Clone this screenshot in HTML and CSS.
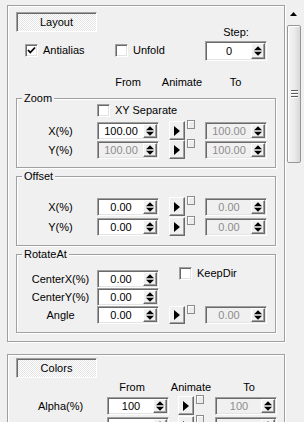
FILE: index.html
```html
<!DOCTYPE html>
<html lang="en">
<head>
    <meta charset="UTF-8">
    <meta name="viewport" content="width=device-width, initial-scale=1.0">
    <title>Layout settings</title>
    <link rel="stylesheet" href="styles.css">
</head>
<body>
    <div class="main">
        <!-- Layout panel -->
        <div class="panel">
            <div class="top">
                <div class="top-left">
                    <div class="tab">Layout</div>
                    <div class="checks">
                        <div class="check check-first">
                            <span class="box"><svg width="9" height="9" viewBox="0 0 9 9"><polyline points="1,4 3.3,6.5 8,1.5" fill="none" stroke="#000" stroke-width="1.8"/></svg></span>Antialias
                        </div>
                        <div class="check"><span class="box"></span>Unfold</div>
                    </div>
                </div>
                <div class="step">
                    <div class="step-label">Step:</div>
                    <div class="spin spin-tall">
                        <span class="val">0</span>
                        <span class="spin-btn"><svg width="10" height="12" viewBox="0 0 10 12"><polygon points="1,5.3 9,5.3 5,1.3"/><polygon points="1,6.7 9,6.7 5,10.7"/></svg></span>
                    </div>
                </div>
            </div>

            <div class="heads">
                <span></span><span>From</span><span>Animate</span><span>To</span>
            </div>

            <div class="group group-zoom">
                <div class="group-title">Zoom</div>
                <div class="xy-row">
                    <div class="check"><span class="box"></span>XY Separate</div>
                </div>
                <div class="rows">
                    <div class="row">
                        <span class="lbl">X(%)</span>
                        <div class="spin"><span class="val">100.00</span><span class="spin-btn"><svg width="10" height="12" viewBox="0 0 10 12"><polygon points="1,5.3 9,5.3 5,1.3"/><polygon points="1,6.7 9,6.7 5,10.7"/></svg></span></div>
                        <div class="anim"><span class="anim-btn"><svg width="6" height="10" viewBox="0 0 6 10"><polygon points="0,0 6,5 0,10"/></svg></span><span class="anim-box"></span></div>
                        <div class="spin off"><span class="val">100.00</span><span class="spin-btn"><svg width="10" height="12" viewBox="0 0 10 12"><polygon points="1,5.3 9,5.3 5,1.3"/><polygon points="1,6.7 9,6.7 5,10.7"/></svg></span></div>
                    </div>
                    <div class="row">
                        <span class="lbl">Y(%)</span>
                        <div class="spin off"><span class="val">100.00</span><span class="spin-btn"><svg width="10" height="12" viewBox="0 0 10 12"><polygon points="1,5.3 9,5.3 5,1.3"/><polygon points="1,6.7 9,6.7 5,10.7"/></svg></span></div>
                        <div class="anim"><span class="anim-btn"><svg width="6" height="10" viewBox="0 0 6 10"><polygon points="0,0 6,5 0,10"/></svg></span><span class="anim-box"></span></div>
                        <div class="spin off"><span class="val">100.00</span><span class="spin-btn"><svg width="10" height="12" viewBox="0 0 10 12"><polygon points="1,5.3 9,5.3 5,1.3"/><polygon points="1,6.7 9,6.7 5,10.7"/></svg></span></div>
                    </div>
                </div>
            </div>

            <div class="group group-offset">
                <div class="group-title">Offset</div>
                <div class="rows">
                    <div class="row">
                        <span class="lbl">X(%)</span>
                        <div class="spin"><span class="val">0.00</span><span class="spin-btn"><svg width="10" height="12" viewBox="0 0 10 12"><polygon points="1,5.3 9,5.3 5,1.3"/><polygon points="1,6.7 9,6.7 5,10.7"/></svg></span></div>
                        <div class="anim"><span class="anim-btn"><svg width="6" height="10" viewBox="0 0 6 10"><polygon points="0,0 6,5 0,10"/></svg></span><span class="anim-box"></span></div>
                        <div class="spin off"><span class="val">0.00</span><span class="spin-btn"><svg width="10" height="12" viewBox="0 0 10 12"><polygon points="1,5.3 9,5.3 5,1.3"/><polygon points="1,6.7 9,6.7 5,10.7"/></svg></span></div>
                    </div>
                    <div class="row">
                        <span class="lbl">Y(%)</span>
                        <div class="spin"><span class="val">0.00</span><span class="spin-btn"><svg width="10" height="12" viewBox="0 0 10 12"><polygon points="1,5.3 9,5.3 5,1.3"/><polygon points="1,6.7 9,6.7 5,10.7"/></svg></span></div>
                        <div class="anim"><span class="anim-btn"><svg width="6" height="10" viewBox="0 0 6 10"><polygon points="0,0 6,5 0,10"/></svg></span><span class="anim-box"></span></div>
                        <div class="spin off"><span class="val">0.00</span><span class="spin-btn"><svg width="10" height="12" viewBox="0 0 10 12"><polygon points="1,5.3 9,5.3 5,1.3"/><polygon points="1,6.7 9,6.7 5,10.7"/></svg></span></div>
                    </div>
                </div>
            </div>

            <div class="group group-rotate">
                <div class="group-title">RotateAt</div>
                <div class="rows">
                    <div class="row">
                        <span class="lbl">CenterX(%)</span>
                        <div class="spin"><span class="val">0.00</span><span class="spin-btn"><svg width="10" height="12" viewBox="0 0 10 12"><polygon points="1,5.3 9,5.3 5,1.3"/><polygon points="1,6.7 9,6.7 5,10.7"/></svg></span></div>
                        <div class="check keepdir"><span class="box"></span>KeepDir</div>
                    </div>
                    <div class="row">
                        <span class="lbl">CenterY(%)</span>
                        <div class="spin"><span class="val">0.00</span><span class="spin-btn"><svg width="10" height="12" viewBox="0 0 10 12"><polygon points="1,5.3 9,5.3 5,1.3"/><polygon points="1,6.7 9,6.7 5,10.7"/></svg></span></div>
                    </div>
                    <div class="row">
                        <span class="lbl">Angle</span>
                        <div class="spin"><span class="val">0.00</span><span class="spin-btn"><svg width="10" height="12" viewBox="0 0 10 12"><polygon points="1,5.3 9,5.3 5,1.3"/><polygon points="1,6.7 9,6.7 5,10.7"/></svg></span></div>
                        <div class="anim"><span class="anim-btn"><svg width="6" height="10" viewBox="0 0 6 10"><polygon points="0,0 6,5 0,10"/></svg></span><span class="anim-box"></span></div>
                        <div class="spin off"><span class="val">0.00</span><span class="spin-btn"><svg width="10" height="12" viewBox="0 0 10 12"><polygon points="1,5.3 9,5.3 5,1.3"/><polygon points="1,6.7 9,6.7 5,10.7"/></svg></span></div>
                    </div>
                </div>
            </div>
        </div>

        <!-- Colors panel -->
        <div class="panel panel-colors">
            <div class="tab">Colors</div>
            <div class="heads heads-colors">
                <span></span><span>From</span><span>Animate</span><span>To</span>
            </div>
            <div class="rows rows-colors">
                <div class="row">
                    <span class="lbl">Alpha(%)</span>
                    <div class="spin"><span class="val">100</span><span class="spin-btn"><svg width="10" height="12" viewBox="0 0 10 12"><polygon points="1,5.3 9,5.3 5,1.3"/><polygon points="1,6.7 9,6.7 5,10.7"/></svg></span></div>
                    <div class="anim"><span class="anim-btn"><svg width="6" height="10" viewBox="0 0 6 10"><polygon points="0,0 6,5 0,10"/></svg></span><span class="anim-box"></span></div>
                    <div class="spin off"><span class="val">100</span><span class="spin-btn"><svg width="10" height="12" viewBox="0 0 10 12"><polygon points="1,5.3 9,5.3 5,1.3"/><polygon points="1,6.7 9,6.7 5,10.7"/></svg></span></div>
                </div>
                <div class="row">
                    <span class="lbl">Brightness(%)</span>
                    <div class="spin"><span class="val">10</span><span class="spin-btn"><svg width="10" height="12" viewBox="0 0 10 12"><polygon points="1,5.3 9,5.3 5,1.3"/><polygon points="1,6.7 9,6.7 5,10.7"/></svg></span></div>
                    <div class="anim"><span class="anim-btn"><svg width="6" height="10" viewBox="0 0 6 10"><polygon points="0,0 6,5 0,10"/></svg></span><span class="anim-box"></span></div>
                    <div class="spin off"><span class="val">0</span><span class="spin-btn"><svg width="10" height="12" viewBox="0 0 10 12"><polygon points="1,5.3 9,5.3 5,1.3"/><polygon points="1,6.7 9,6.7 5,10.7"/></svg></span></div>
                </div>
            </div>
        </div>
    </div>

    <div class="scrollbar">
        <svg class="sb-arrow" width="7" height="4" viewBox="0 0 7 4"><polygon points="0,4 7,4 3.5,0"/></svg>
        <div class="thumb"><span class="grip"></span></div>
    </div>
</body>
</html>
```

FILE: styles.css
```css
* {
    box-sizing: border-box;
}
body {
    margin: 0;
    width: 304px;
    height: 422px;
    overflow: hidden;
    display: flex;
    background-color: #f0f0f0;
    font-family: "Liberation Sans", Arial, sans-serif;
    font-size: 11px;
    line-height: 13px;
    color: #000;
}
.main {
    width: 286px;
    padding: 5px 0 0 7px;
}
.panel {
    width: 278px;
    padding: 6px 8px 8px;
    border: 1px solid #a0a0a0;
    box-shadow: inset 1px 1px 0 #fff, 1px 1px 0 #fff;
}
.panel-colors {
    margin-top: 12px;
    padding-top: 3px;
    height: 80px;
}
.tab {
    width: 81px;
    height: 20px;
    border: 1px solid;
    border-color: #a0a0a0 #fff #fff #a0a0a0;
    box-shadow: inset 1px 1px 0 #696969;
    background: conic-gradient(#fff 25%, #e4e4e4 0 50%, #fff 0 75%, #e4e4e4 0) 0 0 / 2px 2px;
    text-align: center;
    line-height: 18px;
}
.top {
    display: flex;
}
.top-left {
    width: 189px;
}
.checks {
    display: flex;
    margin: 12px 0 0 9px;
}
.check {
    display: flex;
    align-items: center;
    gap: 5px;
    height: 13px;
}
.check-first {
    width: 90px;
}
.box {
    display: flex;
    align-items: center;
    justify-content: center;
    width: 13px;
    height: 13px;
    background: #fff;
    border: 1px solid;
    border-color: #a0a0a0 #fff #fff #a0a0a0;
    box-shadow: inset 1px 1px 0 #696969, inset -1px -1px 0 #e3e3e3;
}
.step {
    width: 62px;
    margin-top: 14px;
}
.step-label {
    text-align: center;
}
.spin {
    display: flex;
    width: 62px;
    height: 18px;
    padding: 1px;
    background: #fff;
    border: 1px solid;
    border-color: #a0a0a0 #fff #fff #a0a0a0;
    box-shadow: inset 1px 1px 0 #696969, inset -1px -1px 0 #e3e3e3;
}
.spin-tall {
    height: 20px;
    margin-top: 2px;
}
.spin .val {
    flex: 1;
    text-align: center;
    line-height: 14px;
}
.spin-tall .val {
    line-height: 16px;
}
.spin.off {
    background: #f0f0f0;
    color: #8d8d8d;
}
.spin-btn {
    display: flex;
    align-items: center;
    justify-content: center;
    width: 14px;
    background: #f0f0f0;
    border: 1px solid;
    border-color: #fff #696969 #696969 #fff;
    box-shadow: inset -1px -1px 0 #a0a0a0;
}
.heads {
    display: grid;
    grid-template-columns: 73px 62px 46px 61px;
    margin: 15px 0 0 8px;
    text-align: center;
}
.heads-colors {
    grid-template-columns: 72px 72px 46px 70px;
    margin-top: 3px;
}
.group {
    width: 260px;
    margin-top: 8px;
    padding: 0 0 8px 7px;
    border: 1px solid #a0a0a0;
    box-shadow: inset 1px 1px 0 #fff, 1px 1px 0 #fff;
}
.group-zoom {
    margin-top: 9px;
}
.group-offset {
    padding-bottom: 9px;
}
.group-title {
    display: table;
    margin: -7px 0 -1px -2px;
    padding: 0 2px;
    background: #f0f0f0;
}
.xy-row {
    display: flex;
    padding-left: 73px;
}
.rows {
    display: grid;
    margin-top: 4px;
}
.group-offset .rows {
    margin-top: 15px;
    row-gap: 1px;
}
.group-rotate .rows {
    margin-top: 10px;
}
.row {
    display: grid;
    grid-template-columns: 73px 72px 36px 62px;
    height: 19px;
    align-items: end;
}
.group-rotate .row {
    height: 18px;
}
.lbl {
    text-align: center;
    line-height: 18px;
}
.anim {
    display: flex;
    align-self: stretch;
}
.anim-btn {
    display: flex;
    align-items: center;
    justify-content: center;
    width: 16px;
    height: 100%;
    background: #f0f0f0;
    border: 1px solid;
    border-color: #fff #696969 #696969 #fff;
    box-shadow: inset -1px -1px 0 #a0a0a0;
}
.anim-box {
    width: 8px;
    height: 9px;
    margin: -1px 0 0 2px;
    background: #ececec;
    border: 1px solid #8c8c8c;
    box-shadow: inset 1px 1px 0 #fff;
}
.keepdir {
    grid-column: 3 / 5;
    align-self: start;
    margin: -3px 0 0 10px;
}
.rows-colors {
    margin: 2px 0 0 8px;
    row-gap: 1px;
}
.rows-colors .row {
    grid-template-columns: 83px 71px 37px 62px;
}
.rows-colors .lbl {
    padding-right: 10px;
}
.scrollbar {
    width: 18px;
    padding: 12px 0 0 1px;
}
.sb-arrow {
    display: block;
    margin-left: 3px;
}
.thumb {
    display: flex;
    align-items: center;
    justify-content: center;
    width: 14px;
    height: 138px;
    margin-top: 9px;
    border: 1px solid #979797;
    border-radius: 2px;
    background: linear-gradient(to right, #f4f4f4, #ececec 50%, #d8d8d8);
    box-shadow: inset 1px 1px 0 #fff;
}
.grip {
    width: 7px;
    height: 8px;
    background: repeating-linear-gradient(#5c5c5c 0 1px, #fff 1px 2px, transparent 2px 3px);
}
```
